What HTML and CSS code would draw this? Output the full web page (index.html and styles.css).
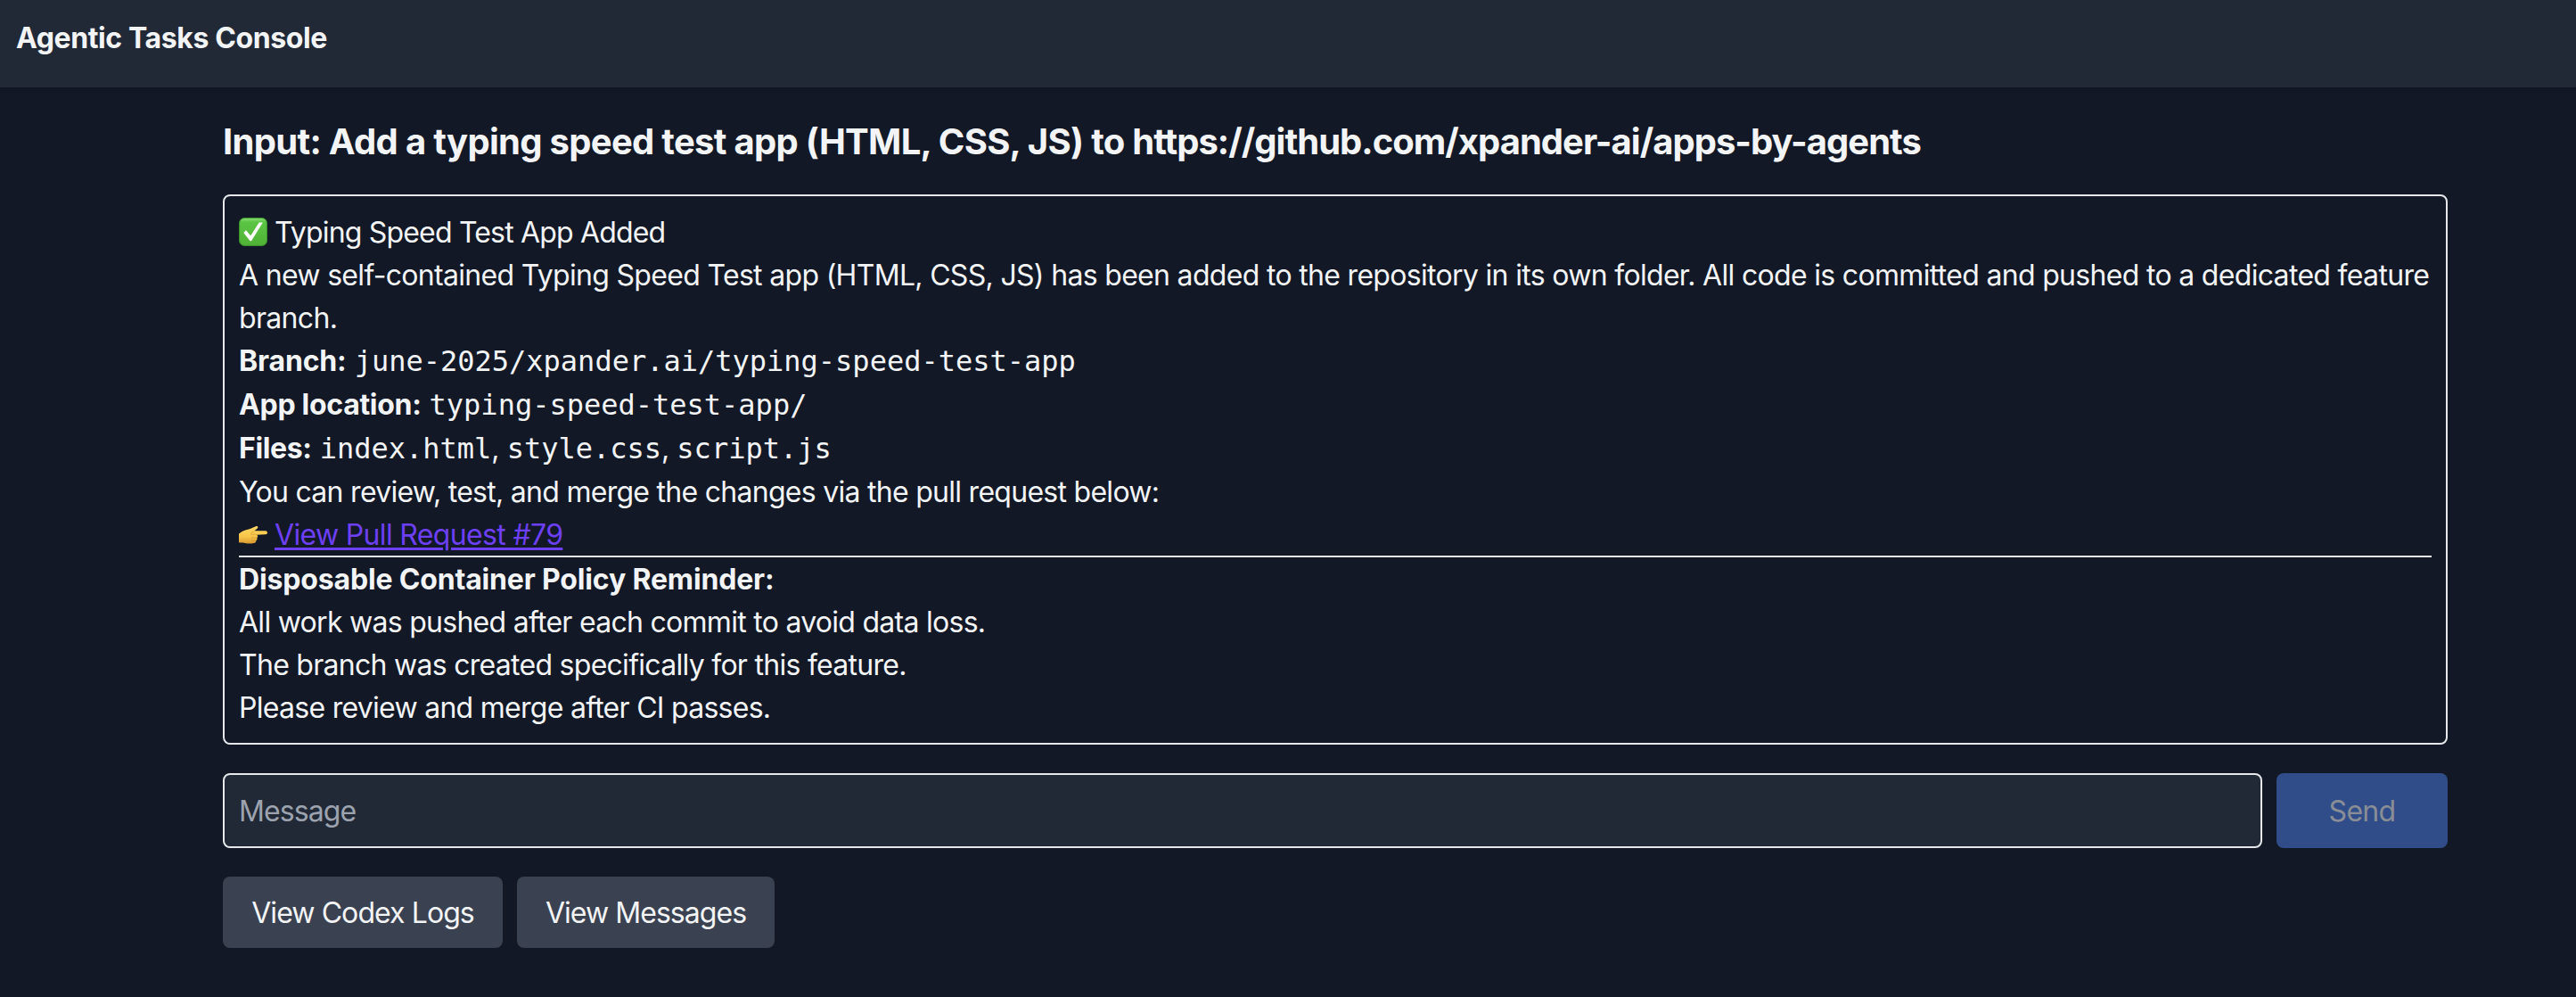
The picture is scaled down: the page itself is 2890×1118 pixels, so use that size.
FILE: index.html
```
<!DOCTYPE html>
<html lang="en">
<head>
<meta charset="utf-8">
<title>Agentic Tasks Console</title>
<link rel="stylesheet" href="styles.css">
</head>
<body>
<header class="topbar"><span class="brand">Agentic Tasks Console</span></header>
<main class="page">
  <h1 class="title">Input: Add a typing speed test app (HTML, CSS, JS) to <span class="repo">https://github.com/xpander-ai/apps-by-agents</span></h1>
  <section class="card">
    <p class="line with-icon">
      <svg class="check" viewBox="0 0 32 32" aria-hidden="true">
        <defs><linearGradient id="green" x1="0" y1="0" x2="0" y2="1"><stop offset="0" stop-color="#8fdf7c"/><stop offset=".14" stop-color="#5cc544"/><stop offset="1" stop-color="#4fb236"/></linearGradient></defs>
        <rect x=".6" y=".6" width="30.8" height="30.8" rx="5.5" fill="url(#green)" stroke="#3d9a2b"/>
        <path d="M5.3 17 8 14.2l5.2 6.1L22.6 5.600h4.200L14 26.300h-1.400z" fill="#fff"/>
      </svg>
      <span class="heading">Typing Speed Test App Added</span>
    </p>
    <p class="summary">A new self-contained Typing Speed Test app (HTML, CSS, JS) has been added to the repository in its own folder. All code is committed and pushed to a dedicated feature branch.</p>
    <p class="line fact branch"><strong>Branch:</strong><code>june-2025/xpander.ai/typing-speed-test-app</code></p>
    <p class="line fact location"><strong>App location:</strong><code>typing-speed-test-app/</code></p>
    <p class="line fact files"><strong>Files:</strong><code>index.html</code><span class="comma">,</span><code>style.css</code><span class="comma">,</span><code>script.js</code></p>
    <p class="line">You can review, test, and merge the changes via the pull request below:</p>
    <p class="line with-icon">
      <svg class="hand" viewBox="0 0 32 20" aria-hidden="true">
        <defs><linearGradient id="skin" x1="0" y1="0" x2="0" y2="1"><stop offset="0" stop-color="#ffd764"/><stop offset=".6" stop-color="#f8c54a"/><stop offset="1" stop-color="#d99a30"/></linearGradient></defs>
        <path d="M0 8.500C3 6.500 5 5 8 4.300 12 3.300 16 1.800 19 .3c1.800-.7 3 .8 1.800 2.300L17.500 5.300H30c2.600 0 2.600 4 0 4l-9.600.4c1 1.400.9 2.700-.2 3.500.6 1.300.2 2.500-.9 3.100 0 1.600-.9 2.600-2.500 2.700-3.200.7-8.300.8-11.300-.2C3.500 18.100 1.500 18.800 0 18.200z" fill="url(#skin)"/>
        <path d="M13.500 9.400c2-.6 4.500-.5 6.900.3M14 13.100c2-.4 4.200-.3 6.200.1M14 16.400c1.800-.3 3.600-.3 5.200-.1M17.500 5.300l-4 2.600" fill="none" stroke="#d3912c" stroke-width=".7"/>
      </svg>
      <a class="link" href="#">View Pull Request #79</a>
    </p>
    <hr class="rule">
    <p class="line"><strong class="policy">Disposable Container Policy Reminder:</strong></p>
    <p class="line">All work was pushed after each commit to avoid data loss.</p>
    <p class="line">The branch was created specifically for this feature.</p>
    <p class="line">Please review and merge after CI passes.</p>
  </section>
  <form class="composer">
    <input class="message" type="text" placeholder="Message">
    <button class="send" type="button" disabled>Send</button>
  </form>
  <div class="actions">
    <button class="action logs" type="button">View Codex Logs</button>
    <button class="action messages" type="button">View Messages</button>
  </div>
</main>
</body>
</html>
```
FILE: styles.css
```
* { box-sizing: border-box; }
body {
  margin: 0;
  background: #121826;
  color: #f3f4f6;
  font: 400 32px/48px Inter, "Liberation Sans", sans-serif;
  letter-spacing: -0.72px;
}
p, h1 { margin: 0; }
button, input { font: inherit; letter-spacing: inherit; }
.topbar {
  height: 98px;
  padding: 19px 18px 0;
  background: #222936;
  box-shadow: 0 2px 4px rgba(0, 0, 0, .12);
}
.brand { font-weight: 700; letter-spacing: -0.4px; }
.page { width: 2496px; margin: 0 0 0 250px; padding-top: 33px; }
.title {
  font-size: 40px;
  line-height: 56px;
  font-weight: 700;
  letter-spacing: -0.7px;
  white-space: nowrap;
  margin-bottom: 31px;
}
.repo { letter-spacing: -0.98px; }
.card {
  border: 2px solid #e5e7eb;
  border-radius: 8px;
  padding: 17px 16px 15px;
  margin-bottom: 32px;
}
.line { height: 48px; white-space: nowrap; }
.summary { letter-spacing: -0.682px; }
.with-icon { display: flex; align-items: center; gap: 8px; }
.check { width: 32px; height: 32px; margin-bottom: 2px; }
.hand { width: 32px; height: 20px; }
.heading { letter-spacing: -0.82px; }
.fact { display: flex; height: 49px; }
code { font-family: "DejaVu Sans Mono", monospace; letter-spacing: 0; }
strong { font-weight: 700; margin-right: 9px; }
.branch strong { letter-spacing: -0.15px; }
.location strong { letter-spacing: -0.3px; }
.files strong { letter-spacing: -0.35px; }
.comma { width: 17.3px; }
.link {
  color: #6d3ff5;
  letter-spacing: -0.66px;
  text-decoration: underline;
  text-decoration-thickness: 3px;
  text-underline-offset: 3px;
}
.rule { height: 2px; margin: -1px 0 1px; border: 0; background: #e5e7eb; }
.policy { letter-spacing: -0.16px; }
.composer { display: flex; gap: 16px; margin-bottom: 32px; }
.message {
  flex: 1;
  min-width: 0;
  height: 84px;
  padding: 1px 16px 0;
  border: 2px solid #e5e7eb;
  border-radius: 8px;
  background: #222936;
  color: #f3f4f6;
  letter-spacing: -0.9px;
}
.message::placeholder { color: #9ca3af; opacity: 1; }
.send {
  width: 192px;
  padding: 2px 0 0;
  border: 0;
  border-radius: 8px;
  background: #304d8a;
  color: #898d95;
}
.actions { display: flex; gap: 16px; }
.action {
  height: 80px;
  padding: 2px 0 0;
  border: 0;
  border-radius: 8px;
  background: #3a4150;
  color: #f3f4f6;
}
.logs { width: 314px; letter-spacing: -0.92px; }
.messages { width: 289px; letter-spacing: -0.95px; }
```
